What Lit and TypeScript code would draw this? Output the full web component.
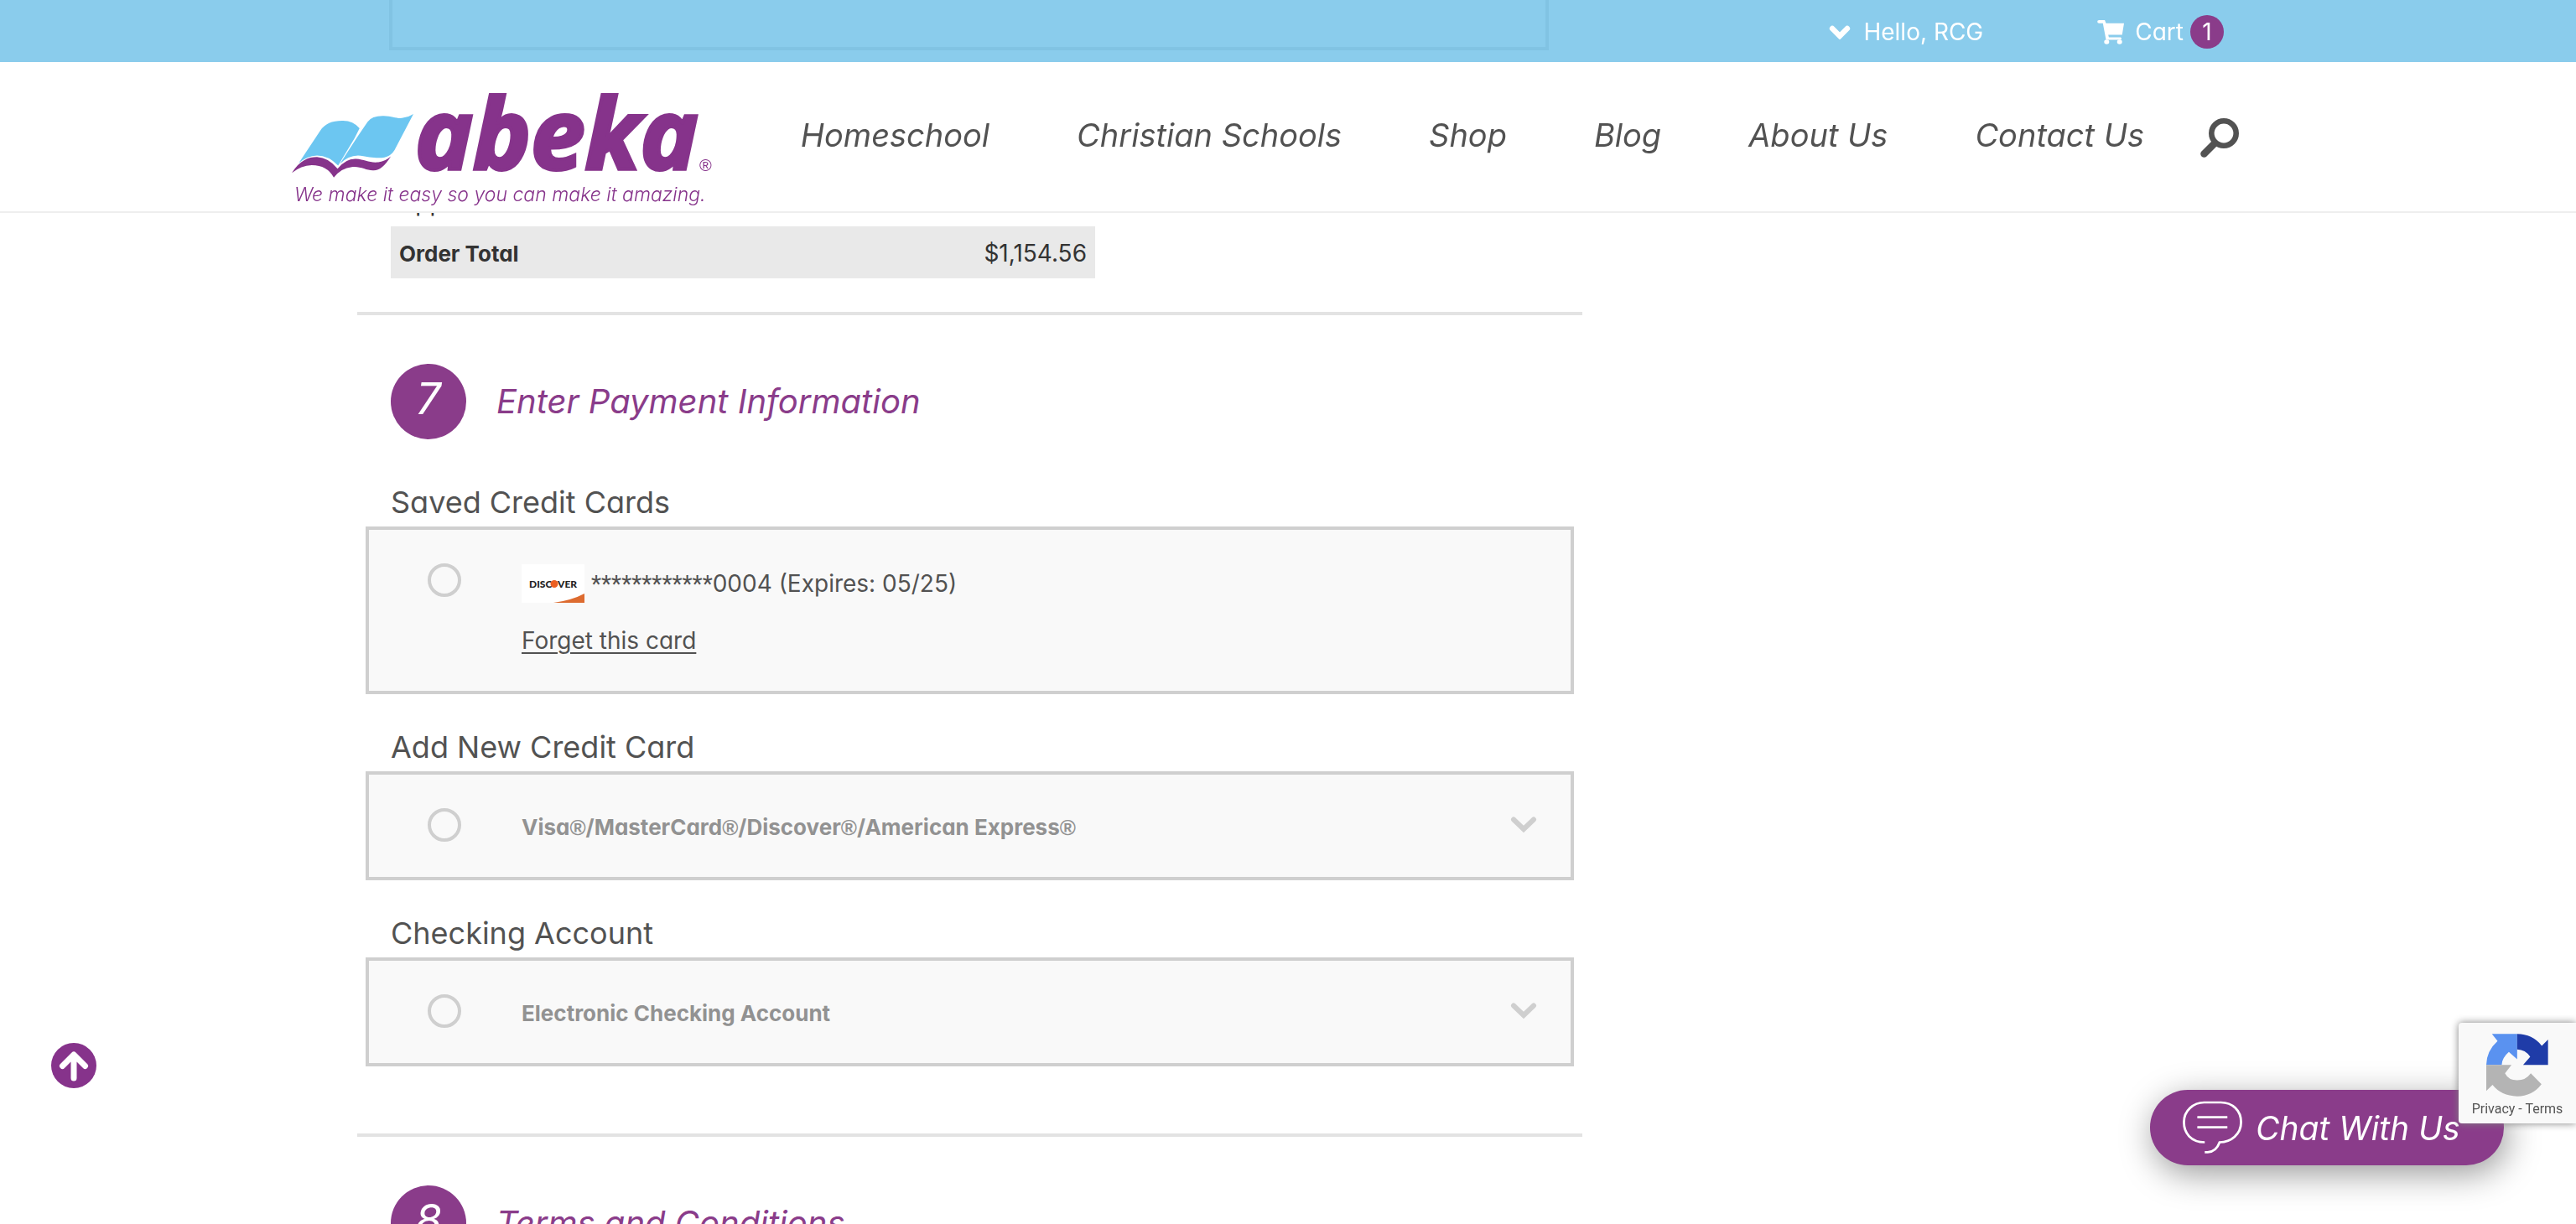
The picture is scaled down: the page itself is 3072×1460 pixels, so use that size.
import { LitElement, html, css, svg } from "lit";
import { customElement, property } from "lit/decorators.js";

const chevron = svg`<path d="M4 4.5 16 16 28 4.5" fill="none" stroke="currentColor" stroke-width="6" stroke-linecap="round" />`;

@customElement("site-logo")
export class SiteLogo extends LitElement {
  static styles = css`
    :host { display: block; flex: none; }
    a { display: block; }
    svg { display: block; overflow: visible; }
    .word { font: italic 700 116px "Open Sans", sans-serif; fill: #86338b; stroke: #86338b; stroke-width: 4px; }
    .tag { font: italic 300 23px Inter, "Open Sans", sans-serif; font-feature-settings: "cv11"; fill: #86338b; }
    .mark { font: 400 20px "Liberation Sans", sans-serif; fill: #86338b; }
  `;
  render() {
    return html`<a href="#" aria-label="Abeka home">
      <svg width="504" height="146" viewBox="0 0 504 146">
        <svg x="0" y="32" width="145" height="76" viewBox="53 170 420 227" preserveAspectRatio="none">
          <path fill="#6cc6f1" d="M77 345 152 228Q175 193 230 194 265 194 287 221L270 256 213 354Q180 318 140 318 105 320 77 345Z" />
          <path fill="#6cc6f1" d="M219 348 278 254 315 198Q330 176 370 177C405 178 420 190 440 183Q458 180 473 170L412 290Q395 330 345 326 320 325 300 320 255 310 219 348Z" />
          <path fill="#86338b" d="M53 380C80 335 110 323 140 323Q180 325 211 365 240 328 275 330C305 332 320 345 352 342Q378 338 395 321 365 372 335 371C310 372 290 355 260 359Q225 362 198 396 175 352 122 352 85 353 53 380Z" />
        </svg>
        <text class="word" x="147" y="98">abeka</text>
        <text class="mark" x="486" y="100">®</text>
        <text class="tag" x="3" y="136">We make it easy so you can make it amazing.</text>
      </svg>
    </a>`;
  }
}

@customElement("site-header")
export class SiteHeader extends LitElement {
  static styles = css`
    :host { display: block; }
    a, button { color: inherit; text-decoration: none; font: inherit; font-feature-settings: inherit; border: 0; background: none; padding: 0; }
    .inner { box-sizing: border-box; max-width: 2400px; margin: 0 auto; display: flex; align-items: center; }
    .top { background: rgba(109, 191, 231, 0.8); color: #fff; font-size: 28px; line-height: 32px; }
    .top .inner { height: 74px; justify-content: flex-end; gap: 136px; padding: 2px 84px 0 12px; }
    .account { display: flex; align-items: center; gap: 15px; }
    .cart { display: flex; align-items: center; gap: 13px; }
    .count { display: flex; align-items: center; gap: 8px; }
    .badge { width: 40px; height: 40px; line-height: 40px; border-radius: 50%; background: #8a3c8a; text-align: center; }
    .bar { background: #fff; border-bottom: 2px solid #eee; }
    .bar .inner { padding: 30px 66px 2px 12px; align-items: flex-start; }
    nav { display: flex; align-items: center; gap: 104px; margin: 0 67px 0 auto; padding-top: 32px; font-size: 38px; line-height: 50px; font-style: italic; color: #525252; white-space: nowrap; }
    .find { display: flex; margin-top: 37px; color: #525252; }
  `;
  render() {
    const links = ["Homeschool", "Christian Schools", "Shop", "Blog", "About Us", "Contact Us"];
    return html`
      <div class="top"><div class="inner">
        <button class="account">
          <svg width="26" height="17" viewBox="0 0 32 21">
            <path d="M5 5 16 16 27 5" fill="none" stroke="currentColor" stroke-width="8" stroke-linecap="round" /></svg>
          <span>Hello, RCG</span>
        </button>
        <a class="cart" href="#">
          <svg width="32" height="29" viewBox="937 70 85 86" preserveAspectRatio="none">
            <path fill="currentColor" d="M943 70h18l4 11h57l-6 41h-44l2 9h37a5 5 0 0 1 0 9h-46L955 81h-12a5 5 0 0 1 0-11Z" />
            <circle cx="967" cy="147" r="8" fill="currentColor" /><circle cx="1008" cy="147" r="8" fill="currentColor" /></svg>
          <span class="count">Cart <span class="badge">1</span></span>
        </a>
      </div></div>
      <div class="bar"><div class="inner">
        <site-logo></site-logo>
        <nav>${links.map((l) => html`<a href="#">${l}</a>`)}</nav>
        <button class="find" aria-label="Search">
          <svg width="46" height="47" viewBox="0 0 46 47">
            <circle cx="28" cy="18" r="14.7" fill="none" stroke="currentColor" stroke-width="6.6" />
            <path d="M17 30 4.5 42.5" stroke="currentColor" stroke-width="8.5" stroke-linecap="round" /></svg>
        </button>
      </div></div>`;
  }
}

@customElement("step-heading")
export class StepHeading extends LitElement {
  @property({ type: Number }) step = 1;
  @property() label = "";
  static styles = css`
    :host { display: block; }
    h2 { display: flex; align-items: center; gap: 36px; margin: 0; font-size: 40px; line-height: 92px; font-weight: 400; font-style: italic; color: #8a3c8a; }
    .num { flex: none; width: 90px; height: 90px; line-height: 84px; border-radius: 50%; background: #8a3c8a; color: #fff; font-size: 52px; text-align: center; }
  `;
  render() {
    return html`<h2><span class="num">${this.step}</span><span>${this.label}</span></h2>`;
  }
}

@customElement("chat-widget")
export class ChatWidget extends LitElement {
  static styles = css`
    :host { display: block; }
    .chat { position: fixed; right: 86px; bottom: 70px; width: 422px; height: 90px; border: 0; border-radius: 45px; background: #8a3c8a; color: #fff; padding: 0 0 0 39px; display: flex; align-items: center; gap: 16px; font: italic 400 39px Inter, "Open Sans", sans-serif; font-feature-settings: "cv11"; white-space: nowrap; box-shadow: 4px 10px 40px rgba(0, 0, 0, 0.4); }
    .captcha { position: fixed; right: 0; bottom: 120px; width: 140px; height: 120px; box-sizing: border-box; padding-top: 13px; border-radius: 4px 0 0 4px; background: #f9f9f9; box-shadow: 0 0 10px gray; display: flex; flex-direction: column; align-items: center; gap: 5px; font: 16px/20px Roboto, sans-serif; color: #555; white-space: pre; }
    .captcha a { color: inherit; text-decoration: none; }
    .up { position: fixed; left: 61px; bottom: 162px; border: 0; padding: 0; background: none; display: flex; }
  `;
  render() {
    return html`
      <button class="up" aria-label="Back to top">
        <svg width="54" height="54" viewBox="0 0 54 54">
          <circle cx="27" cy="27" r="27" fill="#86338b" />
          <path d="M27 42V15M13.500 27.500 27 14 40.500 27.500" fill="none" stroke="#fff" stroke-width="7" stroke-linecap="round" stroke-linejoin="round" /></svg>
      </button>
      <button class="chat">
        <svg width="71" height="64" viewBox="238 381 200 190" preserveAspectRatio="none" fill="none" stroke="#fff" stroke-width="8">
          <path d="M312 528C265 528 242 495 242 457 242 415 275 387 310 387H366C405 387 434 415 434 457 434 500 400 528 362 528Q350 562 322 563H312M287 439H388M287 475H388" /></svg>
        <span>Chat With Us</span>
      </button>
      <aside class="captcha">
        <svg width="74" height="75" viewBox="1265 129 209 224" preserveAspectRatio="none">
          <path fill="#5a92f0" d="M1284 130H1369V220L1341 194Q1318 215 1317 240H1265Q1266 190 1303 155Z" />
          <path fill="#1f3ca8" d="M1369 130Q1420 130 1452 172L1473 150V240H1389L1413 211Q1397 186 1369 185Z" />
          <path fill="#b4b4b4" d="M1265 240H1350L1328 270Q1340 295 1369 295 1398 295 1415 270L1451 309Q1420 352 1369 352 1315 350 1286 311L1265 333Z" /></svg>
        <span><a href="#">Privacy</a> - <a href="#">Terms</a></span>
      </aside>`;
  }
}

@customElement("app-root")
export class AppRoot extends LitElement {
  static styles = css`
    :host { display: block; height: 100vh; overflow: hidden; background: #fff; color: #525252; font-family: Inter, "Open Sans", sans-serif; font-feature-settings: "cv11"; font-size: 28px; }
    site-header { position: fixed; top: 0; left: 0; right: 0; z-index: 2; }
    .page { box-sizing: border-box; max-width: 2400px; margin: 0 auto; padding-left: 90px; }
    main { max-width: 1461px; }
    textarea { display: block; box-sizing: border-box; width: calc(100% - 78px); height: 60px; margin: 0 38px; border: 4px solid #cfcfcf; border-top: 0; background: #fff; resize: none; font: inherit; }
    table { width: 840px; margin: 148px 0 40px 40px; border-collapse: collapse; color: #333; }
    th, td { height: 62px; padding: 2px 10px 0; box-sizing: border-box; text-align: left; font-weight: 400; }
    td { text-align: right; }
    .tax th { padding-top: 6px; }
    .total { background: #e9e9e9; }
    .total th { font-weight: 700; font-size: 26px; }
    hr { margin: 0; border: 0; height: 4px; background: #e3e3e3; }
    step-heading { margin: 57px 40px 49px; }
    h3 { margin: 38px 40px 4px; font-size: 36px; line-height: 50px; font-weight: 400; }
    .option { display: flex; align-items: flex-start; margin: 0 10px; padding: 30px 40px 26px 70px; border: 4px solid #cfcfcf; background: #f9f9f9; line-height: 66px; }
    .option.last { margin-bottom: 80px; }
    .option.saved { line-height: 68px; }
    input { appearance: none; flex: none; box-sizing: border-box; width: 40px; height: 40px; margin: 10px 72px 0 0; border: 4px solid #cfcfcf; border-radius: 50%; }
    .body { flex: 1; }
    .card { display: flex; align-items: center; gap: 8px; height: 68px; }
    .mask { font-family: Roboto, sans-serif; }
    .name { flex: 1; height: 66px; font-size: 26px; font-weight: 700; color: #929292; }
    .reg { font-family: "Liberation Sans", sans-serif; }
    .forget { display: block; width: fit-content; color: inherit; text-underline-offset: 4px; text-decoration-thickness: 2px; }
    .more { display: flex; margin-top: 19px; padding: 0; border: 0; background: none; color: #cfcfcf; }
    .brand { font: 900 12px Lato, sans-serif; fill: #222; }
  `;
  private option(id: string, label: string, last = false) {
    const parts = label.split("®");
    return html`<div class="option ${last ? "last" : ""}">
      <input type="radio" name="payment" id=${id} />
      <label class="name" for=${id}>${parts.map((p, i) => html`${i ? html`<span class="reg">®</span>` : ""}${p}`)}</label>
      <button class="more" aria-label="Show ${label}"><svg width="32" height="21" viewBox="0 0 32 21">${chevron}</svg></button>
    </div>`;
  }
  render() {
    return html`
      <site-header></site-header>
      <div class="page"><main>
        <textarea aria-label="Order notes"></textarea>
        <table>
          <tr class="tax"><th scope="row">Applied</th><td></td></tr>
          <tr class="total"><th scope="row">Order Total</th><td>$1,154.56</td></tr>
        </table>
        <hr />
        <step-heading step="7" label="Enter Payment Information"></step-heading>
        <h3>Saved Credit Cards</h3>
        <div class="option saved">
          <input type="radio" name="payment" id="saved" />
          <div class="body">
            <label class="card" for="saved"><svg width="75" height="46" viewBox="0 0 75 46" role="img" aria-label="Discover">
                <rect width="75" height="46" fill="#fff" />
                <path d="M38 46Q60 43 75 35V46Z" fill="#dd6b2f" />
                <text class="brand" x="9" y="28">DISC</text><circle cx="39" cy="23.500" r="4.500" fill="#ec5f22" /><text class="brand" x="43" y="28">VER</text></svg><span><span class="mask">************</span>0004 (Expires: 05/25)</span></label>
            <a class="forget" href="#">Forget this card</a>
          </div>
        </div>
        <h3>Add New Credit Card</h3>
        ${this.option("card", "Visa®/MasterCard®/Discover®/American Express®")}
        <h3>Checking Account</h3>
        ${this.option("check", "Electronic Checking Account", true)}
        <hr />
        <step-heading step="8" label="Terms and Conditions"></step-heading>
      </main></div>
      <chat-widget></chat-widget>`;
  }
}
